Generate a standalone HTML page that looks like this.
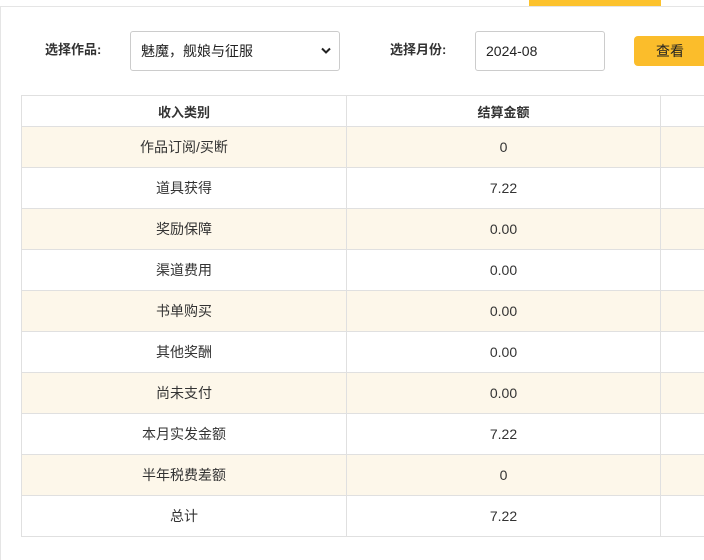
<!DOCTYPE html>
<html><head><meta charset="utf-8"><style>
body{margin:0;width:704px;height:560px;background:#fff;position:relative;overflow:hidden;font-family:"Liberation Sans","Noto Sans CJK SC",sans-serif;color:#333;font-size:14px}
.topline{position:absolute;left:0;top:6px;width:704px;height:1px;background:#e5e5e5}
.leftline{position:absolute;left:0;top:6px;width:1px;height:554px;background:#e5e5e5}
.tab{position:absolute;left:529px;top:0;width:132px;height:6px;background:#fcc22d}
.lbl{position:absolute;top:39px;font-size:13px;font-weight:bold;color:#333}
.box{position:absolute;top:31px;border:1px solid #ccc;border-radius:3px;box-sizing:border-box;height:40px;font-size:14px;color:#222;line-height:38px;padding-left:10px}
.btn{position:absolute;left:634px;top:36px;width:80px;height:30px;background:#fbbd2b;border-radius:4px;font-size:14px;line-height:30px;padding-left:22px;box-sizing:border-box;color:#222}
table{position:absolute;left:21px;top:95px;border-collapse:collapse;width:700px}
td,th{border:1px solid #e0e0e0;text-align:center;font-size:14px;height:40px;padding:0;color:#333}
th{height:30px;font-weight:bold;font-size:13px}
tr.y td{background:#fdf7ea}
</style></head><body>
<div class="topline"></div><div class="leftline"></div><div class="tab"></div>
<div class="lbl" style="left:45px">选择作品:</div>
<div class="box" style="left:130px;width:210px">魅魔，舰娘与征服<svg style="position:absolute;right:8px;top:15px" width="10" height="8" viewBox="0 0 10 8"><path d="M1 1.5 5 5.5 9 1.5" stroke="#222" stroke-width="2" fill="none"/></svg></div>
<div class="lbl" style="left:390px">选择月份:</div>
<div class="box" style="left:475px;width:130px">2024-08</div>
<div class="btn">查看</div>
<table>
<colgroup><col style="width:325px"><col style="width:314px"><col></colgroup>
<tr><th>收入类别</th><th>结算金额</th><th></th></tr>
<tr class="y"><td>作品订阅/买断</td><td>0</td><td></td></tr>
<tr><td>道具获得</td><td>7.22</td><td></td></tr>
<tr class="y"><td>奖励保障</td><td>0.00</td><td></td></tr>
<tr><td>渠道费用</td><td>0.00</td><td></td></tr>
<tr class="y"><td>书单购买</td><td>0.00</td><td></td></tr>
<tr><td>其他奖酬</td><td>0.00</td><td></td></tr>
<tr class="y"><td>尚未支付</td><td>0.00</td><td></td></tr>
<tr><td>本月实发金额</td><td>7.22</td><td></td></tr>
<tr class="y"><td>半年税费差额</td><td>0</td><td></td></tr>
<tr><td>总计</td><td>7.22</td><td></td></tr>
</table>
</body></html>
